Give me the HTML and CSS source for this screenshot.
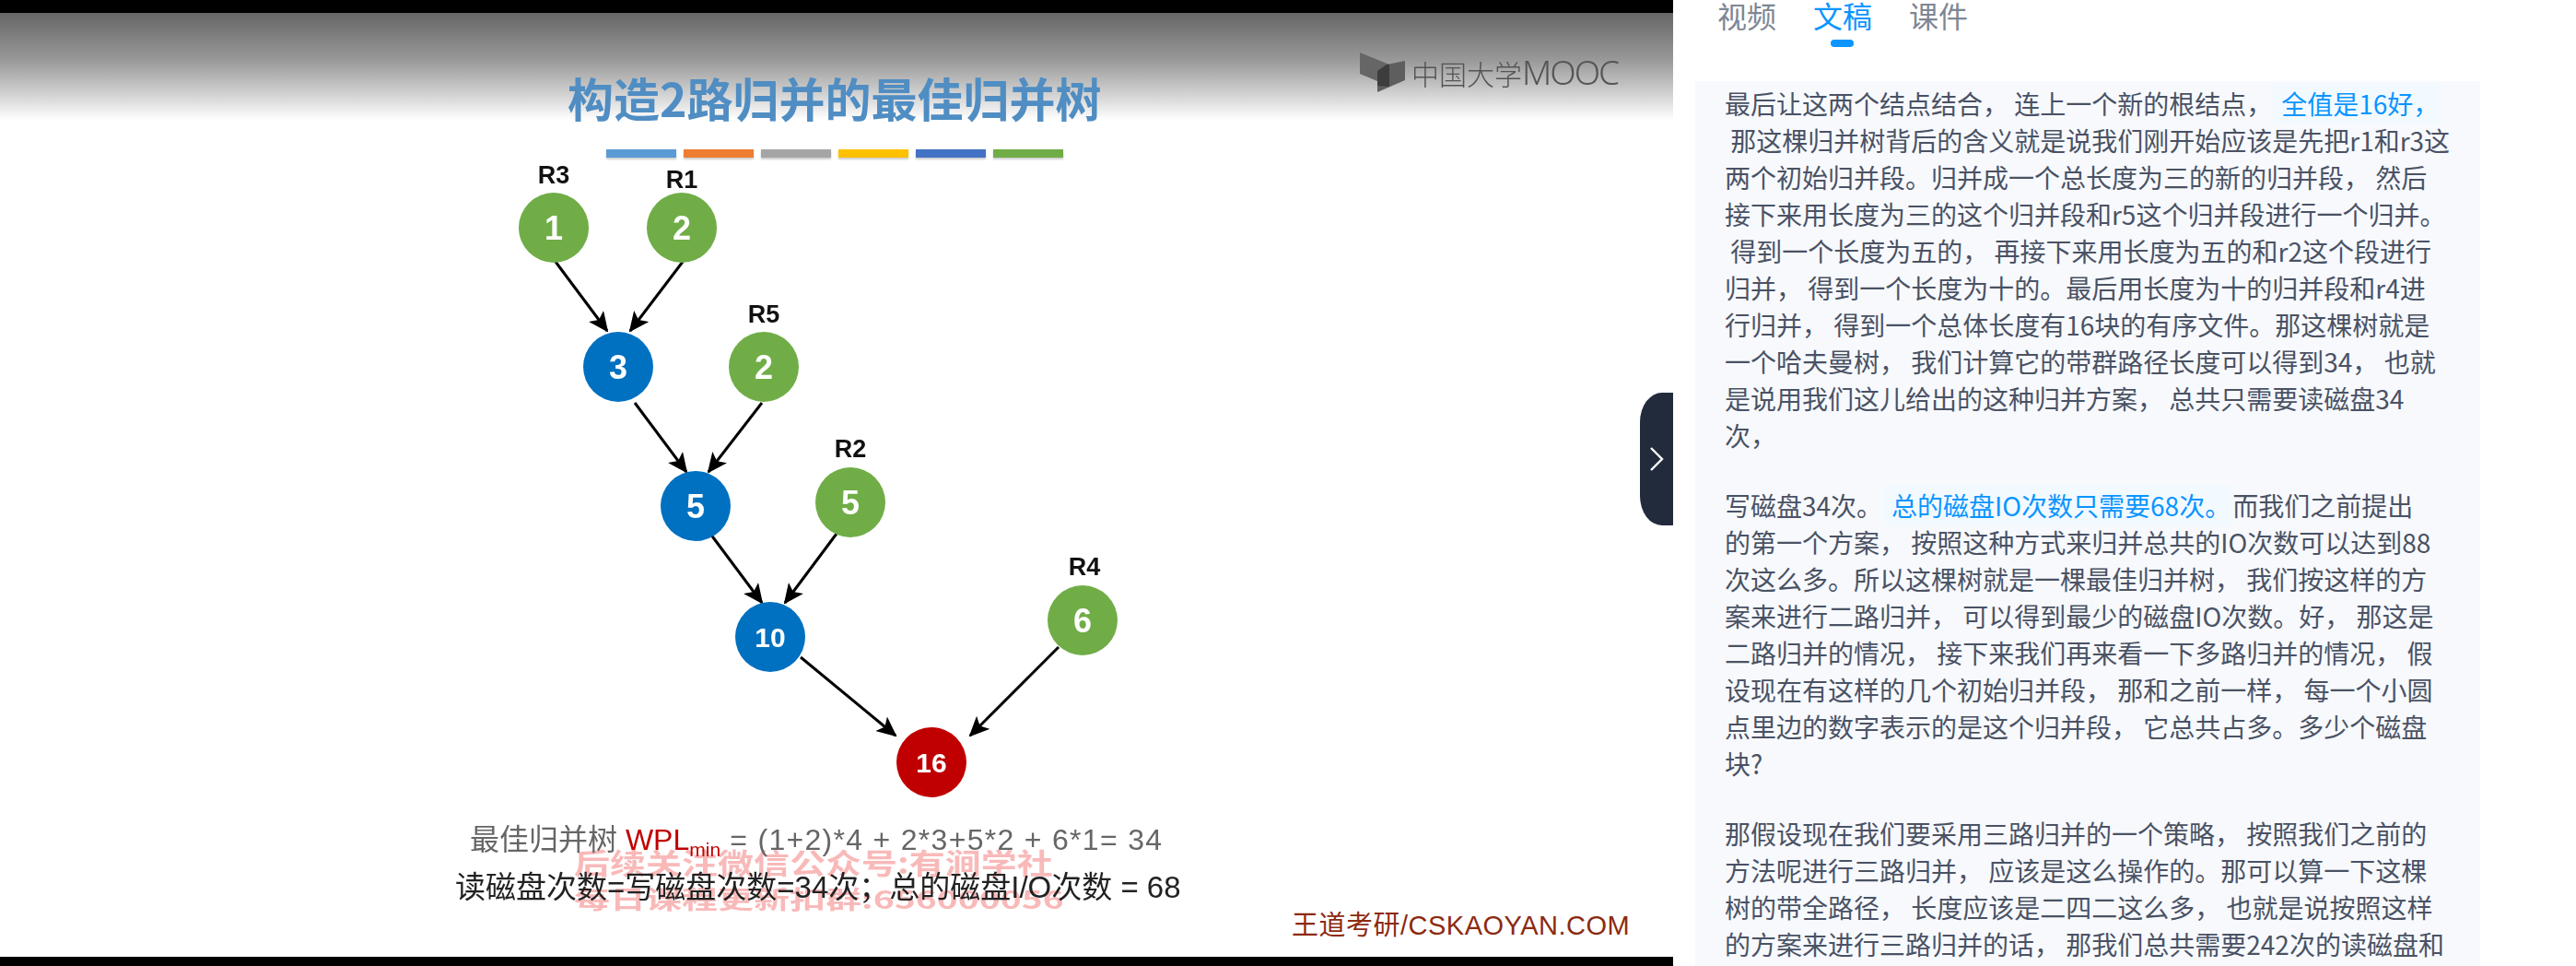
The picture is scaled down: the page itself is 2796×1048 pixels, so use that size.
FILE: index.html
```html
<!DOCTYPE html>
<html lang="zh-CN">
<head>
    <meta charset="UTF-8">
    <title>文稿</title>
    <link rel="stylesheet" href="styles.css">
</head>
<body>
    <main class="page">
        <section class="player">
            <div class="slide">
                <div class="fade"></div>
                <h1 class="slide-title">构造2路归并的最佳归并树</h1>
                <div class="bars">
                    <span class="bar bar-1"></span>
                    <span class="bar bar-2"></span>
                    <span class="bar bar-3"></span>
                    <span class="bar bar-4"></span>
                    <span class="bar bar-5"></span>
                    <span class="bar bar-6"></span>
                </div>
                <div class="mooc">
                    <svg class="mooc-icon" width="50" height="44" viewBox="0 0 50 44">
                        <path d="M0 0 L32 13 L19 20 L19 31 L0 23 Z" fill="#666"/>
                        <path d="M19 43 L19 20 L29 13 L49 9 L49 30 Z" fill="#5e5e5e"/>
                        <path d="M19 20 L29 13 L32 13 L32 37 L19 36 Z" fill="#3d3d3d"/>
                    </svg>
                    <span class="mooc-cn">中国大学</span><span class="mooc-en">MOOC</span>
                </div>

                <svg class="tree" width="1816" height="1048" viewBox="0 0 1816 1048">
                    <defs>
                        <marker id="tip" markerUnits="userSpaceOnUse" markerWidth="22" markerHeight="20" refX="20" refY="10" orient="auto">
                            <path d="M0 0 L22 10 L0 20 L5 10 Z" fill="#000"/>
                        </marker>
                    </defs>
                    <g class="edges">
                        <line x1="603" y1="284" x2="659" y2="359"/>
                        <line x1="741" y1="284" x2="684" y2="359"/>
                        <line x1="689" y1="437" x2="745" y2="512"/>
                        <line x1="827" y1="437" x2="769" y2="512"/>
                        <line x1="771" y1="579" x2="827" y2="654"/>
                        <line x1="908" y1="579" x2="852" y2="654"/>
                        <line x1="869" y1="713" x2="972" y2="798"/>
                        <line x1="1149" y1="702" x2="1053" y2="798"/>
                    </g>
                    <g class="labels">
                        <text x="601" y="199">R3</text>
                        <text x="740" y="204">R1</text>
                        <text x="829" y="350">R5</text>
                        <text x="923" y="496">R2</text>
                        <text x="1177" y="624">R4</text>
                    </g>
                    <circle class="leaf" cx="601" cy="247" r="38"/>
                    <circle class="leaf" cx="740" cy="247" r="38"/>
                    <circle class="leaf" cx="829" cy="398" r="38"/>
                    <circle class="leaf" cx="923" cy="545" r="38"/>
                    <circle class="leaf" cx="1175" cy="673" r="38"/>
                    <circle class="inner" cx="671" cy="398" r="38"/>
                    <circle class="inner" cx="755" cy="549" r="38"/>
                    <circle class="inner" cx="836" cy="691" r="38"/>
                    <circle class="root" cx="1011" cy="827" r="38"/>
                    <g class="nums">
                        <text x="601" y="260">1</text>
                        <text x="740" y="260">2</text>
                        <text x="829" y="411">2</text>
                        <text x="923" y="558">5</text>
                        <text x="1175" y="686">6</text>
                        <text x="671" y="411">3</text>
                        <text x="755" y="562">5</text>
                        <text class="small" x="836" y="702">10</text>
                        <text class="small" x="1011" y="838">16</text>
                    </g>
                </svg>

                <p class="mark mark-1">后续关注微信公众号:有涧学社</p>
                <p class="mark mark-2">每日课程更新扣群:656000056</p>
                <p class="formula">最佳归并树 <span class="wpl">WPL<sub>min</sub></span><span class="expr"> = (1+2)*4 + 2*3+5*2 + 6*1= 34</span></p>
                <p class="count">读磁盘次数=写磁盘次数=34次；总的磁盘I/O次数 = 68</p>
                <p class="brand">王道考研/CSKAOYAN.COM</p>
            </div>
            <button class="fold" type="button">
                <svg width="16" height="26" viewBox="0 0 16 26"><path d="M2 1 L14 13 L2 25" fill="none" stroke="#fff" stroke-width="2.4"/></svg>
            </button>
        </section>

        <aside class="side">
            <nav class="tabs">
                <a class="tab">视频</a>
                <a class="tab active">文稿</a>
                <a class="tab">课件</a>
            </nav>
            <div class="script">
<p>最后让这两个结点结合， 连上一个新的根结点，<span class="hl">全值是16好，</span>
 那这棵归并树背后的含义就是说我们刚开始应该是先把r1和r3这
两个初始归并段。归并成一个总长度为三的新的归并段， 然后
接下来用长度为三的这个归并段和r5这个归并段进行一个归并。
 得到一个长度为五的， 再接下来用长度为五的和r2这个段进行
归并， 得到一个长度为十的。最后用长度为十的归并段和r4进
行归并， 得到一个总体长度有16块的有序文件。那这棵树就是
一个哈夫曼树， 我们计算它的带群路径长度可以得到34， 也就
是说用我们这儿给出的这种归并方案， 总共只需要读磁盘34
次，</p>
<p>写磁盘34次。<span class="hl">总的磁盘IO次数只需要68次。</span>而我们之前提出
的第一个方案， 按照这种方式来归并总共的IO次数可以达到88
次这么多。所以这棵树就是一棵最佳归并树， 我们按这样的方
案来进行二路归并， 可以得到最少的磁盘IO次数。好， 那这是
二路归并的情况， 接下来我们再来看一下多路归并的情况， 假
设现在有这样的几个初始归并段， 那和之前一样， 每一个小圆
点里边的数字表示的是这个归并段， 它总共占多。多少个磁盘
块?</p>
<p>那假设现在我们要采用三路归并的一个策略， 按照我们之前的
方法呢进行三路归并， 应该是这么操作的。那可以算一下这棵
树的带全路径， 长度应该是二四二这么多， 也就是说按照这样
的方案来进行三路归并的话， 那我们总共需要242次的读磁盘和</p>
            </div>
        </aside>
    </main>
</body>
</html>
```

FILE: styles.css
```css
html, body {
    margin: 0;
    height: 1048px;
    overflow: hidden;
    background: #fff;
    font-family: "Noto Sans CJK SC", "Noto Sans", sans-serif;
}

.page {
    display: flex;
    height: 1048px;
}

/* video frame, everything in it sits on the frame as a free canvas */
.player {
    position: relative;
    flex: 0 0 1816px;
    height: 1048px;
    background: #000;
}

.slide {
    position: absolute;
    left: 0;
    top: 14px;
    width: 1816px;
    height: 1024px;
    background: #fff;
    overflow: hidden;
}

.fade {
    height: 116px;
    background: linear-gradient(#666, #9a9a9a 45%, #e2e2e2 85%, #fff);
}

.slide-title {
    position: absolute;
    left: 616px;
    top: 59px;
    margin: 0;
    font-size: 50px;
    line-height: 64px;
    font-weight: 700;
    color: #4f8dc3;
    white-space: nowrap;
    filter: blur(.6px);
}

.bars {
    position: absolute;
    left: 658px;
    top: 148px;
    display: flex;
    gap: 8px;
}

.bar {
    width: 76px;
    height: 9px;
    box-shadow: 0 2px 2px rgba(0, 0, 0, .2);
}

.bar-1 { background: #5b9bd5; }
.bar-2 { background: #ed7d31; }
.bar-3 { background: #a5a5a5; }
.bar-4 { background: #ffc000; }
.bar-5 { background: #4472c4; }
.bar-6 { background: #70ad47; }

.mooc {
    position: absolute;
    left: 1476px;
    top: 43px;
    display: flex;
    align-items: flex-start;
    color: #555;
    white-space: nowrap;
    filter: blur(.5px);
}

.mooc-icon {
    margin-right: 6px;
}

.mooc-cn {
    font-size: 30px;
    line-height: 44px;
    font-weight: 300;
}

.mooc-en {
    font-family: "Noto Sans", sans-serif;
    font-size: 37px;
    line-height: 42px;
    font-weight: 300;
    letter-spacing: -2px;
}

.tree {
    position: absolute;
    left: 0;
    top: -14px;
    filter: blur(.5px);
}

.edges line {
    stroke: #000;
    stroke-width: 3;
    marker-end: url(#tip);
}

.labels text {
    font-family: "Liberation Sans", sans-serif;
    font-size: 27px;
    font-weight: 700;
    text-anchor: middle;
    fill: #111;
}

.leaf { fill: #70ad47; }
.inner { fill: #0070c0; }
.root { fill: #c00000; }

.nums text {
    font-family: "Liberation Sans", sans-serif;
    font-size: 36px;
    font-weight: 700;
    text-anchor: middle;
    fill: #fff;
}

.nums .small {
    font-size: 30px;
}

.formula, .count, .mark, .brand {
    position: absolute;
    margin: 0;
    white-space: nowrap;
}

.formula {
    left: 510px;
    top: 875px;
    font-family: "Liberation Sans", "Noto Sans CJK SC", sans-serif;
    font-size: 32px;
    line-height: 44px;
    color: #666;
    filter: blur(.5px);
}

.wpl { color: #c00000; }

.wpl sub {
    font-size: 21px;
    line-height: 0;
}

.expr {
    letter-spacing: 1.3px;
}

.count {
    left: 494px;
    top: 927px;
    font-family: "Liberation Sans", "Noto Sans CJK SC", sans-serif;
    font-size: 33px;
    line-height: 44px;
    color: #222;
    filter: blur(.5px);
}

.mark {
    font-size: 39px;
    line-height: 50px;
    font-weight: 700;
    color: rgba(240, 70, 70, .38);
    transform: scaleY(.8);
    transform-origin: left top;
    filter: blur(.6px);
}

.mark-1 { left: 623px; top: 900px; }

.mark-2 {
    left: 623px;
    top: 943px;
    transform: scaleY(.7);
}

.brand {
    left: 1402px;
    top: 972px;
    font-family: "Liberation Sans", "Noto Sans CJK SC", sans-serif;
    font-size: 29px;
    line-height: 36px;
    letter-spacing: .5px;
    color: #8c2a10;
}

.fold {
    position: absolute;
    right: 0;
    top: 426px;
    width: 36px;
    height: 144px;
    padding: 0 0 0 10px;
    border: none;
    border-radius: 24px 0 0 24px / 32px 0 0 32px;
    background: #222b3c;
    display: flex;
    align-items: center;
}

.side {
    flex: 1;
    min-width: 0;
}

.tabs {
    display: flex;
    gap: 40px;
    padding-left: 48px;
    height: 88px;
    font-size: 32px;
    line-height: 32px;
}

.tab {
    position: relative;
    color: #7e8794;
}

.tab.active {
    color: #0a95ff;
}

.tab.active::after {
    content: "";
    position: absolute;
    left: 19px;
    top: 43px;
    width: 25px;
    height: 8px;
    border-radius: 4px;
    background: #0a95ff;
}

.script {
    width: 788px;
    margin-left: 24px;
    padding: 4px 32px 0;
    background: #f7f9fd;
    font-size: 28px;
    line-height: 40px;
    color: #4a5264;
    height: 960px;
}

.script p {
    margin: 0 0 36px;
    white-space: pre;
}

.hl {
    color: #0a95ff;
    background: #f3faff;
    padding: 2px 2px 2px 8px;
    margin-left: 2px;
}
```
